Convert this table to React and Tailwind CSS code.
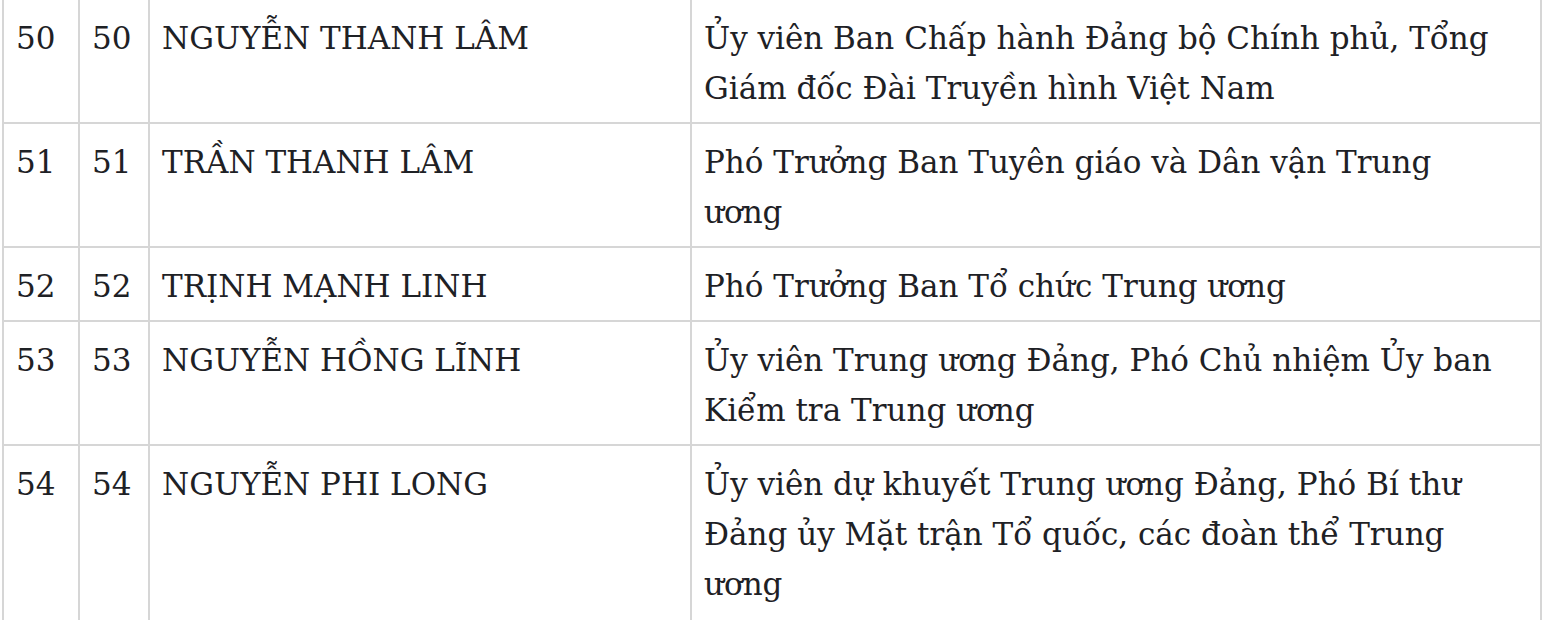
const rows = [
  { stt: '50', no: '50', name: 'NGUYỄN THANH LÂM', role: ['Ủy viên Ban Chấp hành Đảng bộ Chính phủ, Tổng', 'Giám đốc Đài Truyền hình Việt Nam'] },
  { stt: '51', no: '51', name: 'TRẦN THANH LÂM', role: ['Phó Trưởng Ban Tuyên giáo và Dân vận Trung', 'ương'] },
  { stt: '52', no: '52', name: 'TRỊNH MẠNH LINH', role: ['Phó Trưởng Ban Tổ chức Trung ương'] },
  { stt: '53', no: '53', name: 'NGUYỄN HỒNG LĨNH', role: ['Ủy viên Trung ương Đảng, Phó Chủ nhiệm Ủy ban', 'Kiểm tra Trung ương'] },
  { stt: '54', no: '54', name: 'NGUYỄN PHI LONG', role: ['Ủy viên dự khuyết Trung ương Đảng, Phó Bí thư', 'Đảng ủy Mặt trận Tổ quốc, các đoàn thể Trung', 'ương'] },
];

export default function App() {
  return (
    <div className="bg-white h-[620px] overflow-hidden">
      <table
        className="table-fixed border-collapse -mt-[2px] ml-[2px] w-[1540px] text-[#1e2125] text-[31px] leading-[50px]"
        style={{ fontFamily: '"DejaVu Serif", "Liberation Serif", serif' }}
      >
        <colgroup>
          <col className="w-[76px]" />
          <col className="w-[70px]" />
          <col className="w-[542px]" />
          <col />
        </colgroup>
        <tbody>
          {rows.map((r, idx) => {
            const cell = idx === rows.length - 1
              ? 'border-2 border-[#d6d6d6] px-3 pt-[13px] pb-[20px] align-top'
              : 'border-2 border-[#d6d6d6] px-3 pt-[13px] pb-[9px] align-top';
            return (
              <tr key={r.stt}>
                <td className={cell}>{r.stt}</td>
                <td className={cell}>{r.no}</td>
                <td className={cell}>{r.name}</td>
                <td className={cell}>
                  {r.role.map((line, i) => (
                    <div key={i} className="whitespace-nowrap">{line}</div>
                  ))}
                </td>
              </tr>
            );
          })}
        </tbody>
      </table>
    </div>
  );
}
